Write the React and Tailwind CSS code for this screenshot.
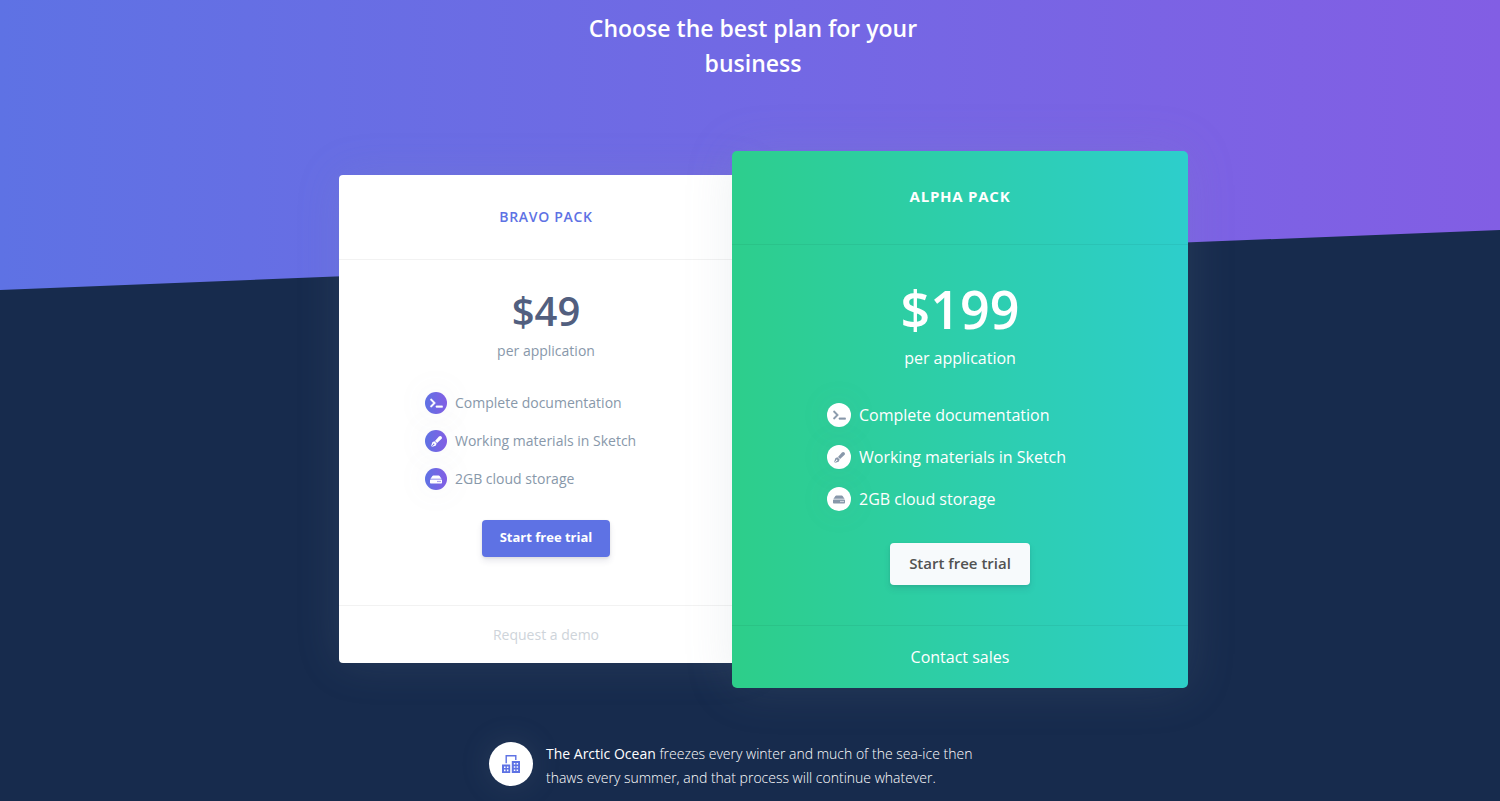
import { FaTerminal, FaPenFancy, FaHdd } from "react-icons/fa";

function TerminalIcon() {
  return <FaTerminal className="h-2.5 w-[13px]" stroke="currentColor" strokeWidth="20" />;
}

function PenIcon() {
  return <FaPenFancy className="size-[11px]" />;
}

function StorageIcon() {
  return <FaHdd className="h-[11px] w-3" />;
}

const features = [
  { Icon: TerminalIcon, label: "Complete documentation" },
  { Icon: PenIcon, label: "Working materials in Sketch" },
  { Icon: StorageIcon, label: "2GB cloud storage" },
];

function BuildingIcon() {
  return (
    <svg viewBox="0 0 18 18" className="size-[18px]" fill="#5e72e4" aria-hidden="true">
      <path d="M3.5 0h11v5h-1.4V1.4H4.9v6.8H3.5z" />
      <path fillRule="evenodd" d="M0 9.5h8.2V18H0zM2 11.5v1.6h1.5v-1.6zM4.9 11.5v1.6h1.5v-1.6zM2 14.6v1.6h1.5v-1.6zM4.9 14.6v1.6h1.5v-1.6z" />
      <path fillRule="evenodd" d="M9.8 6H18v12H9.8zM11.8 8v1.5h1.5V8zM14.6 8v1.5h1.5V8zM11.8 11.2v1.5h1.5v-1.5zM14.6 11.2v1.5h1.5v-1.5zM11.8 14.4v1.5h1.5v-1.5zM14.6 14.4v1.5h1.5v-1.5z" />
    </svg>
  );
}

function BravoCard() {
  return (
    <article className="mt-6 flex w-[414px] flex-col rounded-[4px] bg-white text-center text-sm text-[#8898aa] shadow-[0_0_45px_rgba(136,152,170,0.15)]">
      <header className="border-b border-black/5 px-6 py-8">
        <h2 className="text-sm leading-5 font-semibold tracking-wider text-[#5e72e4] uppercase">Bravo pack</h2>
      </header>
      <div className="flex flex-col items-center px-6 pt-6">
        <div className="text-[40px] leading-[54px] font-semibold text-[#525f7f]">$49</div>
        <p className="leading-[26px]">per application</p>
        <ul className="mt-7 flex w-[242px] flex-col gap-4 text-left">
          {features.map(({ Icon, label }) => (
            <li key={label} className="flex items-center gap-2">
              <span className="flex size-[22px] items-center justify-center rounded-full bg-linear-to-r from-[#5e72e4] to-[#825ee4] text-white shadow-[0_0_32px_rgba(136,152,170,0.1)]">
                <Icon />
              </span>
              <span className="leading-5">{label}</span>
            </li>
          ))}
        </ul>
        <button type="button" className="mt-[30px] mb-12 h-[37px] rounded-[4px] bg-[#5e72e4] px-[18px] pb-0.5 text-[13px] font-bold text-white shadow-[0_4px_6px_rgba(50,50,93,0.11),0_1px_3px_rgba(0,0,0,0.08)]">
          Start free trial
        </button>
      </div>
      <footer className="border-t border-black/5 pt-[19px] pb-[18px]">
        <a href="#demo" className="leading-5 text-[#ced4da]">Request a demo</a>
      </footer>
    </article>
  );
}

function AlphaCard() {
  return (
    <article className="-ml-[21px] flex w-[456px] flex-col rounded-[5px] bg-linear-[87deg] from-[#2dce89] to-[#2dcecc] text-center text-base text-white shadow-[0_0_50px_rgba(136,152,170,0.15)]">
      <header className="border-b border-black/5 px-6 pt-[34px] pb-[37px]">
        <h2 className="text-[15px] leading-[22px] font-bold tracking-wider uppercase">Alpha pack</h2>
      </header>
      <div className="flex flex-col items-center px-6 pt-8">
        <div className="text-[52px] leading-[64px] font-semibold">$199</div>
        <p className="leading-[34px]">per application</p>
        <ul className="mt-7 flex w-[266px] flex-col gap-[18px] text-left">
          {features.map(({ Icon, label }) => (
            <li key={label} className="flex items-center gap-2">
              <span className="flex size-6 items-center justify-center rounded-full bg-white text-[#8898aa] shadow-[0_0_32px_rgba(136,152,170,0.1)]">
                <Icon />
              </span>
              <span className="leading-6">{label}</span>
            </li>
          ))}
        </ul>
        <button type="button" className="mt-8 mb-10 h-[42px] rounded-[4px] bg-[#f7fafc] px-[19px] pb-0.5 text-[15px] font-semibold text-[#525252] shadow-[0_4px_7px_rgba(50,50,93,0.11),0_1px_3px_rgba(0,0,0,0.08)]">
          Start free trial
        </button>
      </div>
      <footer className="border-t border-black/5 py-[19px]">
        <a href="#sales" className="leading-6">Contact sales</a>
      </footer>
    </article>
  );
}

export default function App() {
  return (
    <main className="grid min-h-screen bg-[#172b4d] font-['Open_Sans',sans-serif] text-white">
      <div className="col-start-1 row-start-1 h-[290px] bg-linear-to-r from-[#5e72e4] to-[#825ee4] [clip-path:polygon(0_0,100%_0,100%_230px,0_100%)]" />
      <div className="relative col-start-1 row-start-1 flex flex-col items-center pt-[11px] pl-1.5">
        <h1 className="w-[400px] text-center text-[23px] leading-[35px] font-semibold">Choose the best plan for your business</h1>
        <section className="mt-[70px] flex items-start justify-center">
          <BravoCard />
          <div className="-mr-[21px]">
            <AlphaCard />
          </div>
        </section>
        <section className="mt-[50px] flex w-[528px] items-center gap-[13px]">
          <span className="flex size-11 shrink-0 items-center justify-center rounded-full bg-white shadow-[0_0_32px_rgba(136,152,170,0.15)]">
            <BuildingIcon />
          </span>
          <p className="w-[450px] pt-1 text-sm leading-6 font-light">
            <strong className="font-normal">The Arctic Ocean</strong> freezes every winter and much of the sea-ice then thaws every summer, and that process will continue whatever.
          </p>
        </section>
      </div>
    </main>
  );
}
